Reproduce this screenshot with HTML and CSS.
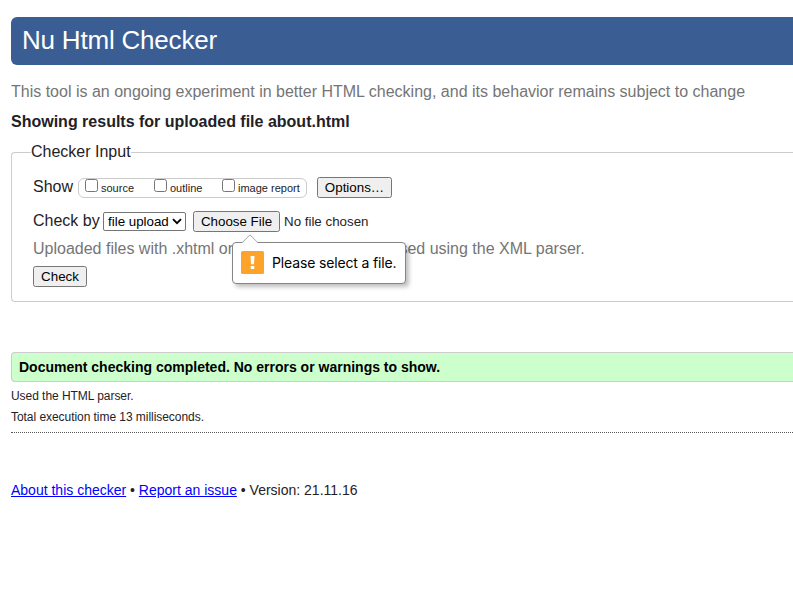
FILE: index.html
```html
<!DOCTYPE html>
<html lang="en">
<head>
<meta charset="utf-8">
<title>Nu Html Checker</title>
<link rel="stylesheet" href="styles.css">
</head>
<body>
<h1 class="banner">Nu Html Checker</h1>
<p class="tagline">This tool is an ongoing experiment in better HTML checking, and its behavior remains subject to change</p>
<h2 class="results-for">Showing results for uploaded file about.html</h2>
<form class="checker">
  <div class="legend">Checker Input</div>
  <div class="row show-row">
    <span class="row-label">Show</span>
    <div class="show-group">
      <label class="option source"><input type="checkbox" class="check"><span>source</span></label>
      <label class="option outline"><input type="checkbox" class="check"><span>outline</span></label>
      <label class="option report"><input type="checkbox" class="check"><span>image report</span></label>
    </div>
    <button type="button" class="btn options">Options…</button>
  </div>
  <div class="row by-row">
    <span class="row-label by">Check by</span>
    <div class="select"><span>file upload</span>
      <svg class="chevron" width="10" height="7" viewBox="0 0 10 7"><path d="M1 1.2 5 5.2 9 1.2" fill="none" stroke="#000" stroke-width="1.9"/></svg>
    </div>
    <div class="file">
      <button type="button" class="btn choose">Choose File</button>
      <div class="bubble">
        <svg class="arrow" width="18" height="10" viewBox="0 0 18 10"><path d="M1 9 9 .8 17 9V10H1Z" fill="#fff"/><path d="M.8 9 9 .8 17.2 9" fill="none" stroke="#a5a5a5"/></svg>
        <svg class="warn" width="23" height="23" viewBox="0 0 23 23"><rect width="23" height="23" rx="1.5" fill="#fda329"/><path d="M9.5 5h4l-.5 8.2h-3zM9.7 15h3.6v3H9.7z" fill="#fff"/></svg>
        <span>Please select a file.</span>
      </div>
    </div>
    <span class="chosen">No file chosen</span>
  </div>
  <p class="hint">Uploaded files with .xhtml or .xht extensions are parsed using the XML parser.</p>
  <button type="button" class="btn submit">Check</button>
</form>
<p class="success">Document checking completed. No errors or warnings to show.</p>
<p class="detail">Used the HTML parser.</p>
<p class="detail">Total execution time 13 milliseconds.</p>
<hr class="rule">
<p class="about"><a href="#">About this checker</a> • <a href="#">Report an issue</a> • Version: 21.11.16</p>
</body>
</html>
```
FILE: styles.css
```css
* { box-sizing: border-box; }
html { overflow: hidden; }
body {
  margin: 0;
  padding: 17px 0 0 11px;
  background: #fff;
  color: #1f2126;
  font: 16px/20px "Liberation Sans", Arial, sans-serif;
  white-space: nowrap;
}
p, h1, h2 { margin: 0; }
.banner {
  height: 48px;
  padding-left: 11px;
  border-radius: 6px 0 0 6px;
  background: #3a5e93;
  color: #fff;
  font-size: 26px;
  font-weight: 400;
  letter-spacing: -.2px;
  line-height: 47px;
}
.tagline { margin-top: 17px; color: #757575; }
.results-for { margin-top: 10px; font-size: 16px; line-height: 20px; }
.checker {
  height: 150px;
  margin-top: 20px;
  padding-left: 21px;
  border: 1px solid #ccc;
  border-right: 0;
  border-radius: 4px 0 0 4px;
}
.legend {
  width: 100px;
  height: 20px;
  margin: -11px 0 0 -2px;
  background: #fff;
}
.row { display: flex; align-items: center; }
.show-row { height: 21px; margin-top: 15px; }
.row-label { width: 45px; line-height: 19px; height: 21px; }
.show-group {
  display: flex;
  align-items: flex-start;
  width: 229px;
  height: 20px;
  padding-left: 6px;
  border: 1px solid #ccc;
  border-radius: 6px;
}
.option { display: flex; font-size: 11px; line-height: 19px; }
.option.source { width: 69px; }
.option.outline { width: 68px; }
.check {
  appearance: none;
  width: 13px;
  height: 13px;
  margin: 0 3px 0 0;
  border: 1px solid #767676;
  border-radius: 2.5px;
  background: #fff;
}
.btn {
  height: 21px;
  padding: 0;
  border: 1px solid #767676;
  border-radius: 2.5px;
  background: #efefef;
  color: #000;
  font: 13.333px/18px "Liberation Sans", Arial, sans-serif;
  text-align: center;
}
.options { width: 75px; margin-left: 10px; }
.by-row { height: 21px; margin-top: 13px; }
.row-label.by { width: 70px; }
.select {
  display: flex;
  align-items: center;
  justify-content: space-between;
  width: 83px;
  height: 19px;
  padding: 0 3px 0 4px;
  border: 1px solid #767676;
  border-radius: 2px;
  color: #000;
  font-size: 13.333px;
  line-height: 17px;
}
.file { position: relative; margin-left: 7px; height: 21px; }
.choose { display: block; width: 87px; }
.chosen { margin-left: 4px; font-size: 13.333px; }
.bubble {
  position: absolute;
  top: 31px;
  left: 39px;
  display: flex;
  align-items: center;
  width: 174px;
  height: 42px;
  padding-left: 8px;
  gap: 8px;
  border: 1px solid #858585;
  border-radius: 4px;
  background: #fff;
  box-shadow: 3px 3px 4px rgba(0, 0, 0, .25);
  color: #000;
  font: 14px/20px Inter, "Liberation Sans", sans-serif;
  letter-spacing: -.15px;
}
.arrow { position: absolute; top: -9px; left: 8px; }
.warn { margin-bottom: 1px; }
.hint { margin-top: 7px; color: #757575; }
.submit { display: block; width: 54px; margin-top: 7px; }
.success {
  height: 30px;
  margin-top: 50px;
  padding-left: 7px;
  border: 1px solid #ccc;
  border-right: 0;
  border-radius: 4px 0 0 4px;
  background: #cfc;
  color: #000;
  font-size: 14px;
  font-weight: 700;
  line-height: 28px;
}
.detail { margin-top: 4px; font-size: 12px; letter-spacing: -.05px; line-height: 21px; }
.detail + .detail { margin-top: 0; }
.rule { height: 0; margin: 4px 0 0; border: 0; border-top: 1px dotted #555; }
.about { margin-top: 47px; font-size: 14px; line-height: 20px; }
.about a { color: #00f; }
```
